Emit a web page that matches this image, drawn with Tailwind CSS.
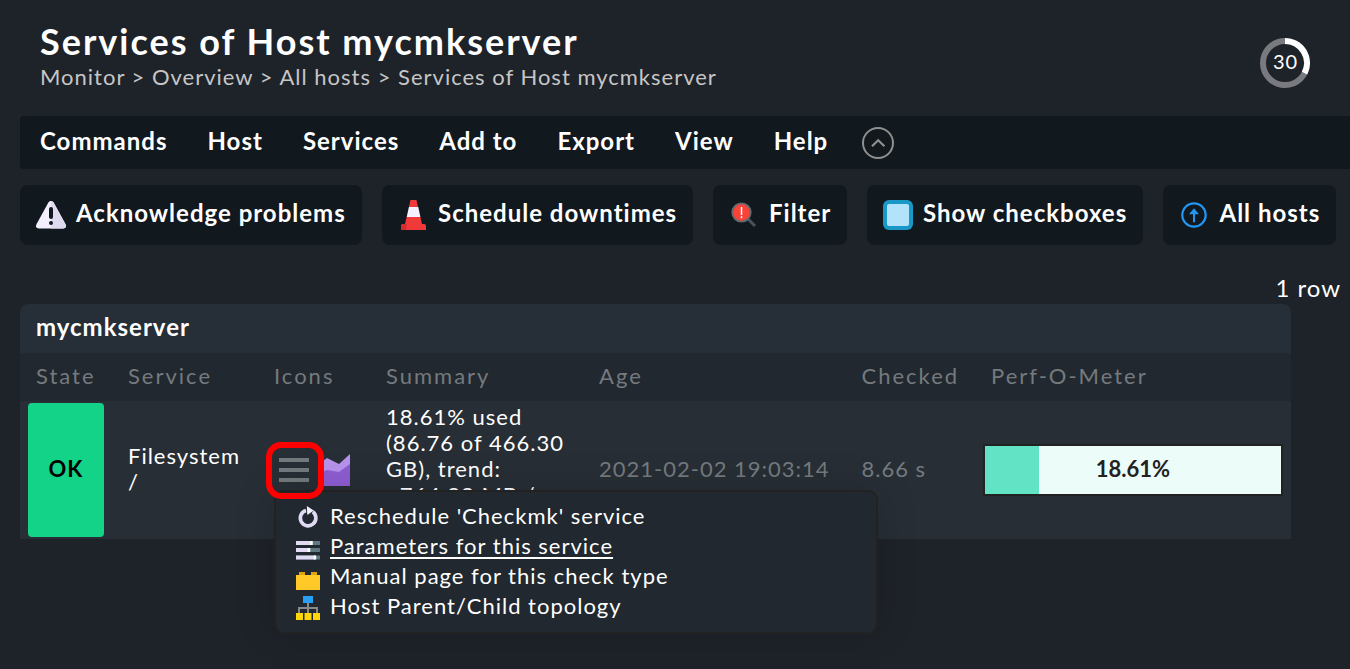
<!DOCTYPE html>
<html lang="en">
<head>
<meta charset="utf-8">
<title>Services of Host mycmkserver</title>
<script src="https://cdn.jsdelivr.net/npm/@tailwindcss/browser@4"></script>
</head>
<body class="h-[669px] overflow-hidden bg-[#1e2229] font-['Lato',sans-serif] text-[22px] leading-[26px] tracking-[1px] whitespace-nowrap text-white">
<header class="flex h-[116px] justify-between pt-[20px] pr-10 pl-10">
  <div>
    <h1 class="mb-[2px] text-[36px] leading-[42px] font-bold tracking-[2px]">Services of Host mycmkserver</h1>
    <p class="text-[#c6c6c6]">Monitor &gt; Overview &gt; All hosts &gt; Services of Host mycmkserver</p>
  </div>
  <div class="relative mt-[18px] size-[50px]">
    <svg class="size-[50px]" viewBox="0 0 50 50" fill="none" stroke-width="6">
      <circle cx="25" cy="25" r="22" stroke="#787a7f"/>
      <path d="M25 3A22 22 0 0 1 44.500 35.200" stroke="#fff"/>
    </svg>
    <span class="absolute inset-0 flex items-center justify-center pb-[5px] pl-[1px] text-[20px] tracking-[1px]">30</span>
  </div>
</header>

<nav class="ml-5 flex h-[53px] items-start gap-10 rounded-l bg-[#11181e] pt-[10px] pl-5 text-[24px] leading-[30px] font-bold">
  <span>Commands</span><span>Host</span><span>Services</span><span>Add to</span><span>Export</span><span>View</span><span>Help</span>
  <svg class="mt-[1px] -ml-[6px] size-8" viewBox="0 0 32 32" fill="none" stroke="#8f8f8f" stroke-width="2">
    <circle cx="16" cy="16" r="15"/><path d="M10 19.300l6.200-6 6.200 6" stroke-width="2.200"/>
  </svg>
</nav>

<div class="mt-4 ml-5 flex h-[60px] gap-5 text-[24px] leading-[30px] font-bold *:flex *:items-center *:gap-[10px] *:rounded-lg *:bg-[#11181e] *:pl-4">
  <a class="w-[342px]">
    <svg class="size-[30px]" viewBox="0 0 30 30">
      <path d="M15 1c1.200 0 2 .6 2.600 1.600L29.400 24c1.400 2.600.3 4.500-2.400 4.500H3C.3 28.500-.8 26.600.6 24L12.400 2.600C13 1.600 13.800 1 15 1z" fill="#f3efff"/>
      <path d="M15 1c1.200 0 2 .6 2.600 1.600L29.400 24c1.400 2.600.3 4.500-2.400 4.500H15z" fill="#e0daf0"/>
      <rect x="13" y="7" width="4" height="12" rx="2" fill="#11181e"/><circle cx="15" cy="23" r="2" fill="#11181e"/>
    </svg><span class="-mt-[5px]">Acknowledge problems</span></a>
  <a class="w-[311px]">
    <svg class="size-[30px]" viewBox="0 0 30 30">
      <path d="M12.500 0h6l1.500 7h-9.100z" fill="#f03a3a"/><path d="M10.900 7H20.300l2.100 10H8.700z" fill="#f6f1ff"/>
      <path d="M8.700 17h13.700l1.600 7H26a2 2 0 0 1 2 2v4H3v-4a2 2 0 0 1 2-2h2z" fill="#f03a3a"/>
      <path d="M5 24h4l-1 6H3v-4a2 2 0 0 1 2-2z" fill="#d52b2b"/>
    </svg><span class="-mt-[5px]">Schedule downtimes</span></a>
  <a class="w-[134px]">
    <svg class="size-[30px]" viewBox="0 0 30 30">
      <path d="M19 19l7 7" stroke="#46535b" stroke-width="3"/>
      <circle cx="12.500" cy="12.500" r="9.200" fill="#fa4238" stroke="#646a6e" stroke-width="1.800"/>
      <path d="M12.500 7v8M12.500 16.300v2" stroke="#fff" stroke-width="1.500"/>
    </svg><span class="-mt-[5px]">Filter</span></a>
  <a class="w-[276px]">
    <svg class="size-[30px]" viewBox="0 0 30 30">
      <rect width="30" height="30" rx="6" fill="#1997c6"/><rect x="4" y="4" width="22" height="22" rx="2" fill="#b3e3fb"/>
    </svg><span class="-mt-[5px]">Show checkboxes</span></a>
  <a class="w-[173px]">
    <svg class="size-[30px]" viewBox="0 0 30 30">
      <circle cx="15" cy="15" r="11.700" fill="none" stroke="#2196f3" stroke-width="2.200"/>
      <path d="M15 8.300l5 6h-4v8h-2v-8h-4z" fill="#2196f3"/>
    </svg><span class="-mt-[5px] ml-[0.5px]">All hosts</span></a>
</div>

<div class="mt-[28px] mr-[9px] h-[31px] text-right text-[24px] leading-[29px]">1 row</div>

<main class="relative ml-5 w-[1271px]">
  <h2 class="h-[49px] rounded-t-lg bg-[#262e37] pt-[8px] pl-4 text-[24px] leading-[30px] font-bold">mycmkserver</h2>
  <div class="grid h-12 grid-cols-[92px_146px_112px_213px_262.500px_129.500px_1fr] bg-[#21282f] pt-[10px] pl-4 tracking-[2px] text-[#757a7e]">
    <span>State</span><span>Service</span><span>Icons</span><span>Summary</span><span>Age</span><span>Checked</span><span>Perf-O-Meter</span>
  </div>
  <div class="grid h-[138px] grid-cols-[108px_146px_112px_213px_262.500px_121.500px_300px] items-center bg-[#272e35]">
    <div class="ml-2 flex h-[134px] w-[76px] items-center justify-center rounded bg-[#13d389] pb-[2px] font-bold text-black">OK</div>
    <div class="-mt-[2px]">Filesystem<br>/</div>
    <div class="flex">
      <svg class="ml-[5px] h-8 w-[30px]" viewBox="0 0 30 32"><path d="M0 6h30M0 16h30M0 26h30" stroke="#74797d" stroke-width="4"/></svg>
      <svg class="ml-[11px] h-8 w-[30px]" viewBox="0 0 30 32">
        <path d="M0 9l7-5 12 6L30 0v32H0z" fill="#b792ec"/><path d="M0 19l7-3 12 2 11-8v22H0z" fill="#8e5dd3"/>
      </svg>
    </div>
    <div class="mt-[3px] self-start">18.61% used<br>(86.76 of 466.30<br>GB), trend:<br>+764.22 MB /</div>
    <div class="-mt-[2px] text-[#757a7e]">2021-02-02 19:03:14</div>
    <div class="-mt-[2px] text-[#757a7e]">8.66 s</div>
    <div class="relative h-[52px] border-2 border-[#222] bg-[#ecfcf9]">
      <div class="h-full w-[54px] bg-[#62e3c6]"></div>
      <span class="absolute inset-0 flex items-center justify-center pb-[2px] font-bold tracking-normal text-[#222]">18.61%</span>
    </div>
  </div>

  <div class="absolute top-[186px] left-[254px] h-[144px] w-[604px] rounded-[10px] border-2 border-[#222] bg-[#21282f] pt-[9px] pl-5 shadow-[0_0_40px_rgba(0,0,0,0.15)] *:flex *:h-[30px] *:items-center *:gap-[10px]">
    <a>
      <svg class="mt-[3px] size-6" viewBox="0 0 24 24"><path d="M16.800 5.800A7.800 7.800 0 1 1 10 4.500" fill="none" stroke="#e0daf3" stroke-width="3.600"/><path d="M10.800 0l7 4.500-6.500 4.500z" fill="#f4f0ff"/></svg>
      <span>Reschedule 'Checkmk' service</span></a>
    <a>
      <svg class="mt-[7px] size-6" viewBox="0 0 24 24"><path d="M0 5h24M0 12h24M0 19.500h24" stroke="#5f7882" stroke-width="4"/><path d="M0 5h15M0 12h13M0 19.500h19" stroke="#e0daf3" stroke-width="4"/><path d="M15.500 3v4M13 10v4M19 17.500v4" stroke="#fff" stroke-width="2.500"/></svg>
      <span class="underline decoration-2 underline-offset-[3px]">Parameters for this service</span></a>
    <a>
      <svg class="mt-[9px] size-6" viewBox="0 0 24 24"><path d="M3 3h6v4H3zM15 3h6v4h-6z" fill="#dfa408"/><path d="M0 6h24v15H0z" fill="#ffc928"/></svg>
      <span>Manual page for this check type</span></a>
    <a>
      <svg class="mt-[3px] size-6" viewBox="0 0 24 24"><path d="M12 6v12M3 18v-6h18v6" fill="none" stroke="#898989" stroke-width="2"/><path d="M7 0h10v7H7z" fill="#27a0f5"/><path d="M0 17h7v7H0zM8.500 17h7v7h-7zM17 17h7v7h-7z" fill="#ffd60a"/></svg>
      <span>Host Parent/Child topology</span></a>
  </div>
  <div class="absolute top-[138px] left-[246px] h-[57px] w-[58px] rounded-[15px] border-[6px] border-[#f00]"></div>
</main>
</body>
</html>
